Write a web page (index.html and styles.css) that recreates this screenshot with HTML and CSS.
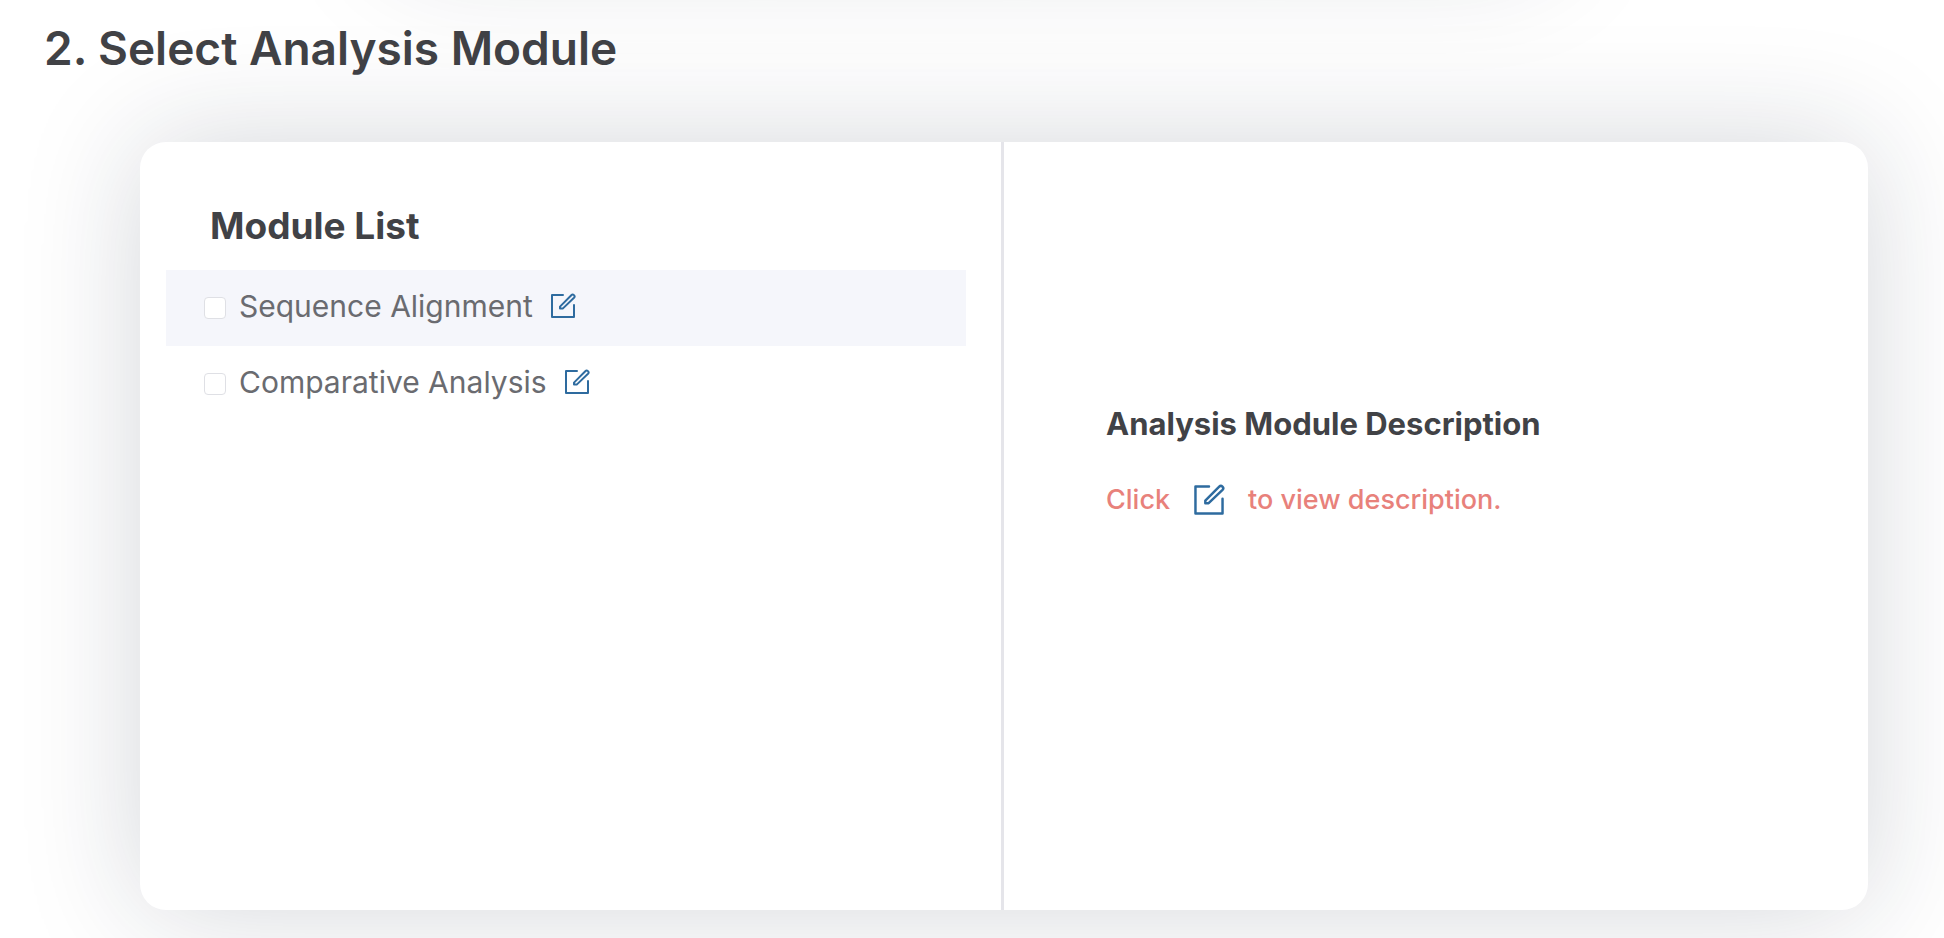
FILE: index.html
```html
<!DOCTYPE html>
<html lang="en">
<head>
<meta charset="utf-8">
<title>Select Analysis Module</title>
<link rel="stylesheet" href="styles.css">
</head>
<body>
<svg class="sprite" aria-hidden="true">
  <symbol id="edit" viewBox="0 0 26 26">
    <path d="M13 2H2V24H24V12"/>
    <path d="M10 15.6V13.6L21.3 2.2A1.8 1.8 0 0 1 24 4.8L12.7 15.6Z"/>
  </symbol>
</svg>
<main class="page">
  <div class="previous-card"></div>
  <h1 class="title">2. Select Analysis Module</h1>
  <section class="card">
    <div class="pane list-pane">
      <h2 class="list-title">Module List</h2>
      <ul class="modules">
        <li class="module module-active">
          <label class="choice"><input class="check" type="checkbox"><span>Sequence Alignment</span></label>
          <button class="edit" type="button" aria-label="View Sequence Alignment description"><svg class="icon"><use href="#edit"/></svg></button>
        </li>
        <li class="module">
          <label class="choice"><input class="check" type="checkbox"><span>Comparative Analysis</span></label>
          <button class="edit" type="button" aria-label="View Comparative Analysis description"><svg class="icon"><use href="#edit"/></svg></button>
        </li>
      </ul>
    </div>
    <div class="pane info-pane">
      <h3 class="info-title">Analysis Module Description</h3>
      <p class="hint"><span>Click</span><svg class="icon icon-large"><use href="#edit"/></svg><span>to view description.</span></p>
    </div>
  </section>
</main>
</body>
</html>
```
FILE: styles.css
```css
* { box-sizing: border-box; }
body {
  margin: 0;
  background: #fff;
  color: #414246;
  font-family: Inter, "Liberation Sans", sans-serif;
  overflow: hidden;
}
h1, h2, h3, p, ul { margin: 0; padding: 0; }
.sprite { display: none; }
.page { position: relative; padding: 18px 76px 28px 44px; }
.previous-card {
  position: absolute;
  top: -200px;
  left: 20%;
  right: 20%;
  height: 160px;
  border-radius: 26px;
  box-shadow: 0 0 120px rgba(20, 35, 55, .15);
}
.title {
  position: relative;
  font-size: 46px;
  line-height: 60px;
  font-weight: 600;
}
.card {
  display: grid;
  grid-template-columns: 1fr 1fr;
  min-height: 768px;
  margin: 64px 0 0 96px;
  border-radius: 26px;
  background: #fff;
  box-shadow: 0 0 120px rgba(20, 35, 55, .18);
  position: relative;
}
.list-pane { padding: 60px 35px 0 26px; border-right: 3px solid #e5e5ea; }
.list-title { padding-left: 44px; font-size: 37px; line-height: 48px; font-weight: 700; }
.modules { margin-top: 20px; list-style: none; }
.module {
  display: flex;
  align-items: flex-start;
  gap: 17px;
  height: 76px;
  padding: 16px 38px;
  color: #6a6b70;
  font-size: 30px;
  line-height: 40px;
}
.module-active { background: #f5f6fb; }
.choice { display: flex; align-items: center; gap: 13px; }
.check {
  appearance: none;
  width: 22px;
  height: 22px;
  margin: 4px 0 0;
  border: 1px solid #dfe0e5;
  border-radius: 4px;
  background: #fff;
}
.edit { display: flex; margin: 0; padding: 7px 0; border: 0; background: none; }
.icon { width: 26px; height: 26px; fill: none; stroke: #2e6b9f; stroke-width: 2; stroke-linejoin: round; stroke-linecap: round; }
.info-pane { padding: 262px 60px 60px 102px; }
.info-title { font-size: 31px; line-height: 40px; font-weight: 700; }
.hint {
  display: flex;
  align-items: center;
  gap: 23px;
  margin-top: 36px;
  color: #e8817b;
  font-size: 27px;
  line-height: 40px;
  font-weight: 500;
}
.icon-large { width: 32px; height: 32px; }
```
